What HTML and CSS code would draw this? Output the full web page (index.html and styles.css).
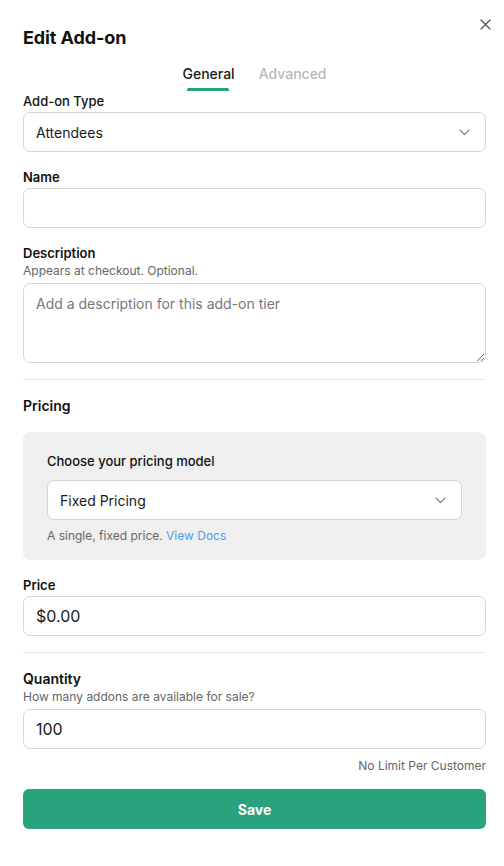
FILE: index.html
```html
<!DOCTYPE html>
<html lang="en">
<head>
<meta charset="utf-8">
<title>Edit Add-on</title>
<link rel="stylesheet" href="styles.css">
</head>
<body>
<div class="modal">
  <button class="close" aria-label="Close">
    <svg width="11" height="11" viewBox="0 0 11 11"><path d="M1 1 L10 10 M10 1 L1 10" stroke="#555" stroke-width="1.3" stroke-linecap="round" fill="none"/></svg>
  </button>
  <h1 class="title">Edit Add-on</h1>
  <div class="tabs">
    <span class="tab active">General</span>
    <span class="tab">Advanced</span>
  </div>

  <label class="label first">Add-on Type</label>
  <div class="select">
    <span>Attendees</span>
    <svg class="chev" width="11" height="7" viewBox="0 0 11 7"><path d="M1 1 L5.5 5.5 L10 1" stroke="#888" stroke-width="1.2" fill="none" stroke-linecap="round" stroke-linejoin="round"/></svg>
  </div>

  <label class="label strong name">Name</label>
  <input class="input" type="text">

  <label class="label strong desc">Description</label>
  <div class="help">Appears at checkout. Optional.</div>
  <textarea class="textarea" placeholder="Add a description for this add-on tier"></textarea>

  <hr class="divider">

  <h2 class="section">Pricing</h2>
  <div class="panel">
    <div class="panel-label">Choose your pricing model</div>
    <div class="select">
      <span>Fixed Pricing</span>
      <svg class="chev" width="11" height="7" viewBox="0 0 11 7"><path d="M1 1 L5.5 5.5 L10 1" stroke="#888" stroke-width="1.2" fill="none" stroke-linecap="round" stroke-linejoin="round"/></svg>
    </div>
    <div class="panel-help">A single, fixed price. <a href="#">View Docs</a></div>
  </div>

  <label class="label strong price">Price</label>
  <input class="input big" type="text" value="$0.00">

  <hr class="divider">

  <h2 class="section qty">Quantity</h2>
  <div class="help">How many addons are available for sale?</div>
  <input class="input big" type="text" value="100">
  <div class="limit">No Limit Per Customer</div>

  <button class="save">Save</button>
</div>
</body>
</html>
```

FILE: styles.css
```css
* { box-sizing: border-box; }
html, body { margin: 0; padding: 0; background: #fff; }
body {
  font-family: Inter, "Noto Sans", sans-serif;
  color: #111;
}
.modal {
  position: relative;
  padding: 26px 18px 30px 23px;
  display: flex;
  flex-direction: column;
}
.close {
  position: absolute;
  top: 18px;
  right: 12px;
  border: 0;
  background: none;
  padding: 0;
  width: 13px;
  height: 13px;
  display: flex;
  align-items: center;
  justify-content: center;
}
.title {
  margin: 0;
  font-size: 18px;
  line-height: 24px;
  font-weight: 700;
  letter-spacing: -0.1px;
}
.tabs {
  display: flex;
  justify-content: center;
  gap: 24px;
  margin-top: 14px;
  height: 24px;
}
.tab {
  position: relative;
  font-size: 14px;
  line-height: 20px;
  font-weight: 500;
  color: #b9b9b9;
}
.tab.active { color: #1a1a1a; }
.tab.active::after {
  content: "";
  position: absolute;
  left: 5px;
  right: 6px;
  bottom: -3px;
  height: 3px;
  border-radius: 2px;
  background: #27a17b;
}
.label {
  display: block;
  font-size: 13px;
  line-height: 18px;
  font-weight: 500;
  margin-bottom: 2px;
}
.label.first { margin-top: 4px; }
.label.strong { font-weight: 600; }
.label.name { margin-top: 16px; }
.label.desc { margin-top: 16px; }
.label.price { margin-top: 16px; }
.help {
  font-size: 12px;
  line-height: 16px;
  color: #666;
  margin-bottom: 4px;
}
.label + .help { margin-top: -1px; }
.select, .input, .textarea {
  width: 100%;
  border: 1px solid #d6d6d6;
  border-radius: 7px;
  background: #fff;
}
.select {
  height: 40px;
  display: flex;
  align-items: center;
  justify-content: space-between;
  padding: 0 15px 0 12px;
  font-size: 14px;
  color: #1a1a1a;
}
.chev { flex: none; }
.input {
  height: 40px;
  padding: 0 12px;
  font-family: inherit;
  font-size: 14px;
  color: #1a1a1a;
  outline: none;
  display: block;
}
.input.big { font-size: 16px; }
.textarea {
  display: block;
  height: 80px;
  padding: 10px 12px;
  font-family: inherit;
  font-size: 14px;
  line-height: 20px;
  resize: vertical;
  outline: none;
}
.textarea::placeholder { color: #777; }
.divider {
  border: 0;
  border-top: 1px solid #e6e6e6;
  margin: 16px 0 0;
  height: 0;
}
.section {
  margin: 16px 0 0;
  font-size: 14px;
  line-height: 20px;
  font-weight: 600;
}
.section.qty { margin-bottom: 0; }
.panel {
  margin-top: 16px;
  background: #efefef;
  border-radius: 8px;
  padding: 20px 24px 16px 24px;
}
.panel-label {
  font-size: 13px;
  line-height: 18px;
  font-weight: 500;
  margin-bottom: 10px;
}
.panel-help {
  margin-top: 8px;
  font-size: 12px;
  line-height: 16px;
  color: #666;
}
.panel-help a { color: #4b9ff2; text-decoration: none; }
.limit {
  margin-top: 9px;
  text-align: right;
  font-size: 12px;
  line-height: 16px;
  color: #666;
}
.save {
  margin-top: 15px;
  height: 40px;
  width: 100%;
  border: 0;
  border-radius: 6px;
  background: #29a37e;
  color: #fff;
  font-family: inherit;
  font-size: 14px;
  font-weight: 700;
}
```
